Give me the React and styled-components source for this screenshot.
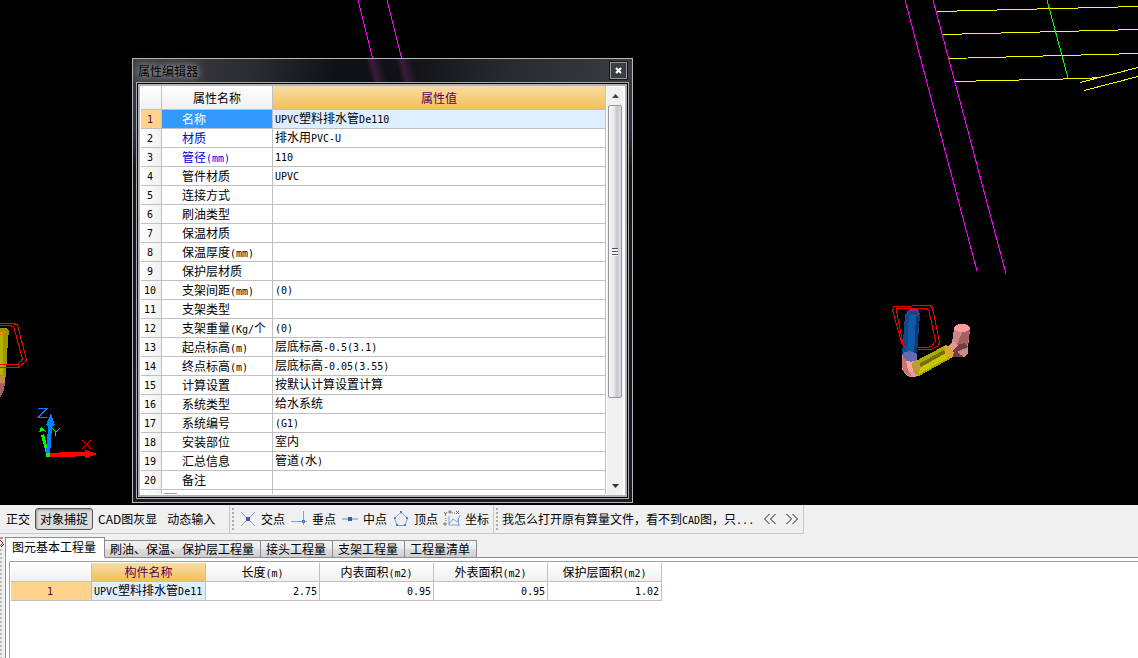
import { useState } from "react";
import styled, { createGlobalStyle } from "styled-components";

const properties = [
    { name: "名称", value: "UPVC塑料排水管De110", selected: true },
    { name: "材质", value: "排水用PVC-U", key: true },
    { name: "管径(mm)", value: "110", key: true },
    { name: "管件材质", value: "UPVC" },
    { name: "连接方式", value: "" },
    { name: "刷油类型", value: "" },
    { name: "保温材质", value: "" },
    { name: "保温厚度(mm)", value: "" },
    { name: "保护层材质", value: "" },
    { name: "支架间距(mm)", value: "(0)" },
    { name: "支架类型", value: "" },
    { name: "支架重量(Kg/个", value: "(0)" },
    { name: "起点标高(m)", value: "层底标高-0.5(3.1)" },
    { name: "终点标高(m)", value: "层底标高-0.05(3.55)" },
    { name: "计算设置", value: "按默认计算设置计算" },
    { name: "系统类型", value: "给水系统" },
    { name: "系统编号", value: "(G1)" },
    { name: "安装部位", value: "室内" },
    { name: "汇总信息", value: "管道(水)" },
    { name: "备注", value: "" },
];

const tabs = ["图元基本工程量", "刷油、保温、保护层工程量", "接头工程量", "支架工程量", "工程量清单"];
const columns = ["长度(m)", "内表面积(m2)", "外表面积(m2)", "保护层面积(m2)"];
const quantities = ["2.75", "0.95", "0.95", "1.02"];

// latin runs are set in a half-width mono face so they line up with the CJK glyphs
function Mixed({ children }) {
    return children.split(/([\x20-\x7e]+)/).map((part, i) =>
        i % 2 ? <Half key={i}>{part}</Half> : part
    );
}

function Scene() {
    return (
        <Canvas aria-hidden="true">
            <g shapeRendering="crispEdges" fill="none" strokeWidth="1">
                <path stroke="#f0f" d="M358 0L373 60M387 0L402 60M905 0L977 271M933 0L1006 274" />
                <path stroke="#ff0" d="M937 11.5L1138 6.5M943 34.5L1138 29.5M949 58.5L1138 53.5M955 81.5L1085 78.5L1100 77.5M1080 82.5L1138 67.5M1084 90.5L1138 76.5" />
                <path stroke="#0f0" d="M1047 0L1068 78" />
            </g>
            <g shapeRendering="crispEdges">
                <path fill="#9c9900" d="M0 328H6L9 331L8 340L6 372L5 382H0Z" />
                <path fill="#b7b300" d="M0 332H3V375H0Z" />
                <path fill="#c68a4a" d="M0 376H5V384H0Z" />
                <path fill="#a85f62" d="M0 383H5L4 390L1 396L0 397Z" />
                <path fill="none" stroke="#ff6a00" d="M0 329H4L6 332L4 334H0" />
                <path fill="none" stroke="red" d="M0 323.5H13L17.500 325L26.500 360L24 363L18 367.500H0M0 325.500H11L14 328L22.500 359L18 364.500H0" />
            </g>
            <g shapeRendering="crispEdges">
                <path fill="#0f0" d="M41 435L44 434L47 446V456L45 450Z M39 432L41 427L46 432L43 431Z" />
                <path fill="#0080ff" d="M46 425L51 413L55 425L52 427L50 455H46L48 427Z" />
                <path fill="red" d="M49 453L68 452H85V450L97 454L85 458V456L67 457H49Z" />
                <path fill="#0f0" d="M46 453H50V457H46Z" />
                <path fill="none" stroke="#0080ff" d="M38 408.500H47L38 417.500H47" />
                <path fill="none" stroke="#0f0" d="M52.500 428.500L56 432L60 428M55.500 431V436" />
                <path fill="none" stroke="red" d="M82 440L91 449M91 440L82 449" />
            </g>
            <g shapeRendering="crispEdges">
                <path fill="#ee9494" d="M902 355Q909 351 917 355L917 370L919 375Q913 379 908 376Q900 370 902 362Z" />
                <path fill="#c77474" d="M902 358L908 358L908 370L912 377Q900 373 902 358Z" />
                <path fill="#ffa2a2" d="M906 360L912 360L913 373L908 370Z" />
                <path fill="#cc8888" d="M954 329H970L968 348L968 353L965 357L957 357L952 350L950 358L944 355L951 349Z" />
                <path fill="#a85f60" d="M963 330L970 329L968 344L955 349Z" />
                <path fill="#743f40" d="M949 356L954 346L965 343L968 347L957 352L964 357H955Z" />
                <path fill="#e69899" d="M948 346L954 341L958 346L949 354Z" />
                <ellipse cx="962" cy="328" rx="8" ry="4" fill="#ff9b9d" />
                <path fill="#aba900" d="M912 363L946 345L949 347L953 357L919 376L913 372Z" />
                <path fill="#737000" d="M915 366L944 350L946 353L917 369Z" />
                <path fill="#c9c800" d="M916 370L948 352L951 356L919 374Z" />
                <path fill="#b99a3c" d="M912 363L918 361L921 367L919 373L913 371Z" />
                <path fill="#dba931" d="M944 346L950 346L954 353L952 358L946 357Z" />
                <path fill="#1159a8" d="M905 314L911 309H918L920 314L917 355Q909 360 902 355Z" />
                <path fill="#0d488d" d="M905 314L909 312L907 357L902 355Z" />
                <path fill="#0b3c79" d="M916 314L920 314L917 355L914 357Z" />
                <path fill="#626cae" d="M903 353Q911 349 917 354L917 360Q909 364 903 358Z" />
                <ellipse cx="913" cy="313" rx="6" ry="3" fill="#144689" stroke="#793584" />
                <path fill="none" stroke="red" d="M906 347.500L902 344L892.500 310L894 306.500L930 305.500L932.500 308L939.500 342L938 346L931 349.500H918M903 344L896.500 311L897 308.500H926L929 311L935.500 341L932 346L928 347.500H918" />
            </g>
        </Canvas>
    );
}

function PropertyDialog() {
    return (
        <Dialog role="dialog" aria-label="属性编辑器">
            <TitleBar>
                <Title>属性编辑器</Title>
                <CloseButton aria-label="关闭">
                    <svg width="7" height="7" viewBox="0 0 7 7"><path d="M1 1L6 6M6 1L1 6" stroke="#fff" strokeWidth="2" /></svg>
                </CloseButton>
            </TitleBar>
            <Frame>
                <PropertyTable>
                    <colgroup>
                        <col width="21" />
                        <col width="111" />
                        <col />
                    </colgroup>
                    <thead>
                        <tr>
                            <HeadCell aria-label="序号" />
                            <HeadCell>属性名称</HeadCell>
                            <HeadCell $active>属性值</HeadCell>
                        </tr>
                    </thead>
                    <tbody>
                        {properties.map((p, index) => (
                            <tr key={p.name}>
                                <NumberCell $active={p.selected}><Mixed>{String(index + 1)}</Mixed></NumberCell>
                                <NameCell $active={p.selected} $key={p.key}><Mixed>{p.name}</Mixed></NameCell>
                                <ValueCell $active={p.selected}><Mixed>{p.value}</Mixed></ValueCell>
                            </tr>
                        ))}
                        <tr>
                            <NumberCell />
                            <NameCell><Expander /></NameCell>
                            <ValueCell />
                        </tr>
                    </tbody>
                </PropertyTable>
                <ScrollBar>
                    <ScrollButton aria-label="向上滚动">
                        <svg width="7" height="4"><path d="M0 4L3.500 0L7 4Z" fill="#444" /></svg>
                    </ScrollButton>
                    <Thumb><Grip /></Thumb>
                    <Track />
                    <ScrollButton aria-label="向下滚动">
                        <svg width="7" height="4"><path d="M0 0H7L3.500 4Z" fill="#333" /></svg>
                    </ScrollButton>
                </ScrollBar>
            </Frame>
        </Dialog>
    );
}

function SnapIcon({ type }) {
    return (
        <svg width="18" height="18" viewBox="0 0 18 18" fill="none" stroke="#78a6dc" strokeWidth="1">
            {type === "cross" && <><path d="M2 2L16 16M16 2L2 16" /><path d="M7 7H11V11H7Z" fill="#3c5dab" stroke="none" /></>}
            {type === "foot" && <><path d="M1 11.500H17M13.500 1V15" /><path d="M12 10H15V13H12Z" fill="#4e7dc6" stroke="none" /></>}
            {type === "middle" && <><path d="M1 9H17" strokeWidth="2" stroke="#a3c4ea" /><path d="M7 7H11V11H7Z" fill="#3c5dab" stroke="none" /></>}
            {type === "vertex" && <><path d="M9 2.500L15.500 8L13 15.500H5L2.500 8Z" /><path d="M8 1h2v2H8zM2 7h2v2H2zM14 7h2v2h-2zM4 14h2v2H4zM12 14h2v2h-2z" fill="#4e7dc6" stroke="none" /></>}
            {type === "coord" && <><path d="M6 6V15H17M6 14L10 9L14 12L17 5M15.500 8V16" /><path d="M1 2L2.500 4L4 2M2.500 4V6M6 1h2v2H6zM1 13h2v2H1zM13 1L16 4M16 1L13 4M3 8v1M3 10v1M9 3h1M11 3h1" stroke="#777" /></>}
        </svg>
    );
}

export default function App() {
    const [active, setActive] = useState(0);

    return (
        <Page>
            <GlobalStyle />
            <Viewport>
                <Scene />
                <PropertyDialog />
            </Viewport>
            <ToolArea>
                <ToolBar $wide>
                    <ToolButton>正交</ToolButton>
                    <ToolButton $pressed aria-pressed="true">对象捕捉</ToolButton>
                    <ToolButton>CAD图灰显</ToolButton>
                    <ToolButton>动态输入</ToolButton>
                </ToolBar>
                <ToolBar>
                    <Handle />
                    <SnapButton><SnapIcon type="cross" />交点</SnapButton>
                    <SnapButton><SnapIcon type="foot" />垂点</SnapButton>
                    <SnapButton><SnapIcon type="middle" />中点</SnapButton>
                    <SnapButton><SnapIcon type="vertex" />顶点</SnapButton>
                    <SnapButton><SnapIcon type="coord" />坐标</SnapButton>
                </ToolBar>
                <ToolBar $tight>
                    <Handle />
                    <HelpLink href="#help"><Mixed>我怎么打开原有算量文件，看不到CAD图，只...</Mixed></HelpLink>
                    <ArrowButton aria-label="上一条">
                        <svg width="12" height="10"><path d="M5.500 0L0.500 5L5.500 10M11.500 0L6.500 5L11.500 10" /></svg>
                    </ArrowButton>
                    <ArrowButton aria-label="下一条">
                        <svg width="12" height="10"><path d="M0.500 0L5.500 5L0.500 10M6.500 0L11.500 5L6.500 10" /></svg>
                    </ArrowButton>
                </ToolBar>
            </ToolArea>
            <Dock>
                <DockHandle>
                    <svg width="4" height="12"><path d="M0 1H3M0 3L3 6L0 9" stroke="#a33" fill="none" /><path d="M1 10L4 7" stroke="#333" /></svg>
                    <Dots />
                </DockHandle>
                <Panel>
                    <TabList role="tablist">
                        {tabs.map((tab, index) => (
                            <Tab
                                key={tab}
                                role="tab"
                                aria-selected={active === index}
                                $active={active === index}
                                onClick={() => setActive(index)}
                            >
                                {tab}
                            </Tab>
                        ))}
                    </TabList>
                    <Sheet>
                        <SheetBox>
                            <QuantityTable>
                                <colgroup>
                                    <col width="81" />
                                    <col span="5" width="114" />
                                </colgroup>
                                <thead>
                                    <tr>
                                        <HeadCell $small aria-label="序号" />
                                        <HeadCell $small $active>构件名称</HeadCell>
                                        {columns.map((c) => (
                                            <HeadCell $small key={c}><Mixed>{c}</Mixed></HeadCell>
                                        ))}
                                    </tr>
                                </thead>
                                <tbody>
                                    <tr>
                                        <NumberCell $active><Mixed>1</Mixed></NumberCell>
                                        <ValueCell $active><Mixed>UPVC塑料排水管De11</Mixed></ValueCell>
                                        {quantities.map((q, index) => (
                                            <ValueCell $right key={index}><Mixed>{q}</Mixed></ValueCell>
                                        ))}
                                    </tr>
                                </tbody>
                            </QuantityTable>
                        </SheetBox>
                    </Sheet>
                </Panel>
            </Dock>
        </Page>
    );
}

const GlobalStyle = createGlobalStyle`
    * {
        box-sizing: border-box;
    }
    body {
        margin: 0;
        background: #f0f0f0;
        color: #000;
        font-family: "Noto Sans CJK SC", sans-serif;
        font-size: 12px;
        line-height: 18px;
    }
    button {
        font: inherit;
        color: inherit;
        padding: 0;
        border: 0;
        background: none;
        white-space: nowrap;
    }
    svg {
        display: block;
        flex: none;
    }
`;

const Half = styled.span`
    font-family: "DejaVu Sans Mono", monospace;
    font-size: 10px;
    line-height: 1;
`;

const Page = styled.div`
    display: flex;
    flex-direction: column;
    min-height: 100vh;
    overflow: hidden;
`;

const Viewport = styled.main`
    position: relative;
    height: 505px;
    background: #000;
`;

const Canvas = styled.svg`
    width: 100%;
    height: 100%;
`;

const Dialog = styled.section`
    position: absolute;
    left: 132px;
    top: 58px;
    width: 501px;
    height: 445px;
    display: flex;
    flex-direction: column;
    padding: 0 3px 3px;
    border: 1px solid #b4b8bb;
    background: linear-gradient(#3a3b3f, #30323a 70px, #15161a 110px, #1b1c24);
`;

const TitleBar = styled.header`
    display: flex;
    justify-content: space-between;
    align-items: center;
    height: 23px;
    margin: 0 -3px;
    padding: 0 5px;
    background:
        linear-gradient(75deg, transparent 230px, #3a1b3c 236px, transparent 246px, transparent 259px, #3a1b3c 265px, transparent 275px),
        linear-gradient(100deg, #3f4043, #2b2c2f 120px, #111216 200px, #111216 270px, #292a2d 370px, #3b3c40);
`;

const Title = styled.h1`
    margin: 0;
    font-size: 12px;
    font-weight: 400;
    color: #000;
    text-shadow: 0 0 4px #94979a, 0 0 8px #94979a, 0 0 12px #85888b;
`;

const CloseButton = styled.button`
    display: flex;
    align-items: center;
    justify-content: center;
    width: 17px;
    height: 17px;
    border: 1px solid #95979a;
    background: #3b3d41;
    box-shadow: 0 0 0 1px #17181a;
`;

const Frame = styled.div`
    display: flex;
    flex: 1;
    min-height: 0;
    overflow: hidden;
    padding: 3px;
    border: 1px solid #a9abad;
    background: #fff;
    box-shadow: inset 0 0 0 1px #000, inset 0 0 0 3px #b2b0b4;
`;

const PropertyTable = styled.table`
    flex: 1;
    align-self: flex-start;
    height: 100%;
    display: table;
    table-layout: fixed;
    border-spacing: 0;
    margin-left: 1px;
    clip-path: inset(0 0 calc(100% - 408px) 0);
`;

const QuantityTable = styled.table`
    width: 651px;
    table-layout: fixed;
    border-spacing: 0;
`;

const HeadCell = styled.th`
    height: ${({ $small }) => ($small ? "19px" : "24px")};
    padding: 0;
    font-weight: 400;
    color: ${({ $active }) => ($active ? "#5a005a" : "#000")};
    background: ${({ $active }) => ($active ? "linear-gradient(#f9dca2, #f1c05e)" : "linear-gradient(#fff, #f0f0f0)")};
    border-right: 1px solid #c0c0c0;
    border-bottom: 1px solid #c0c0c0;
`;

const Cell = styled.td`
    height: 19px;
    padding: 0 2px 2px;
    line-height: 16px;
    overflow: hidden;
    white-space: nowrap;
    border-right: 1px solid #c0c0c0;
    border-bottom: 1px solid #c0c0c0;
`;

const NumberCell = styled(Cell)`
    text-align: center;
    padding: 0 2px 2px 0;
    color: ${({ $active }) => ($active ? "#5a005a" : "#000")};
    background: ${({ $active }) => ($active ? "#ffd38c" : "linear-gradient(90deg, #fff, #f0f0f0)")};
`;

const NameCell = styled(Cell)`
    padding: 0 0 0 20px;
    line-height: 18px;
    color: ${({ $active, $key }) => ($active ? "#fff" : $key ? "#0000e0" : "#000")};
    background: ${({ $active }) => ($active ? "#3399ff" : "#fff")};
`;

const ValueCell = styled(Cell)`
    text-align: ${({ $right }) => ($right ? "right" : "left")};
    background: ${({ $active }) => ($active ? "#deeeff" : "#fff")};
`;

const Expander = styled.div`
    width: 13px;
    height: 13px;
    margin-left: -18px;
    border: 1px solid #a0a0a0;
    background: #f0f0f0;
`;

const ScrollBar = styled.div`
    display: flex;
    flex-direction: column;
    width: 16px;
    margin: 1px 2px 0 1px;
    background: #f0f0f0;
`;

const ScrollButton = styled.button`
    display: flex;
    align-items: center;
    justify-content: center;
    height: 18px;
    flex: none;
`;

const Thumb = styled.div`
    display: flex;
    align-items: center;
    justify-content: center;
    height: 293px;
    flex: none;
    margin: 0 1px;
    border: 1px solid #979797;
    border-radius: 2px;
    background: linear-gradient(90deg, #f7f7f7, #e6e6e8 45%, #c9cad0 60%, #d8d9dd);
`;

const Grip = styled.div`
    width: 6px;
    height: 8px;
    background: repeating-linear-gradient(#555 0 1px, #f5f5f5 1px 3px);
`;

const Track = styled.div`
    flex: 1;
`;

const ToolArea = styled.div`
    display: flex;
    height: 29px;
`;

const ToolBar = styled.div`
    display: flex;
    align-items: center;
    min-width: ${({ $wide }) => ($wide ? "230px" : "0")};
    padding-left: 1px;
    padding-right: ${({ $tight }) => ($tight ? "0" : "4px")};
    border-right: 1px solid #c8c8c8;
    border-bottom: 1px solid #c8c8c8;
    & + & {
        padding-left: 2px;
    }
`;

const ToolButton = styled.button`
    height: 22px;
    padding: 0 4px;
    border: 1px solid ${({ $pressed }) => ($pressed ? "#555" : "transparent")};
    border-radius: 3px;
    background: ${({ $pressed }) => ($pressed ? "#dcdcdc" : "none")};
    box-shadow: ${({ $pressed }) => ($pressed ? "inset 1px 1px 2px #999" : "none")};
`;

const SnapButton = styled.button`
    display: flex;
    align-items: center;
    gap: 4px;
    width: 51px;
    padding-left: 5px;
`;

const Handle = styled.span`
    width: 2px;
    height: 22px;
    background: repeating-linear-gradient(#aaa 0 2px, transparent 2px 4px);
`;

const HelpLink = styled.a`
    margin: 0 5px 0 4px;
    color: #000;
    text-decoration: none;
    white-space: nowrap;
`;

const ArrowButton = styled.button`
    width: 22px;
    svg {
        margin: 0 auto;
        fill: none;
        stroke: #222;
    }
`;

const Dock = styled.div`
    display: flex;
    flex: 1;
    padding-top: 3px;
`;

const DockHandle = styled.div`
    width: 5px;
    display: flex;
    flex-direction: column;
`;

const Dots = styled.div`
    flex: 1;
    width: 2px;
    background: repeating-linear-gradient(#bbb 0 2px, transparent 2px 4px);
`;

const Panel = styled.div`
    flex: 1;
    display: flex;
    flex-direction: column;
    min-width: 0;
`;

const TabList = styled.div`
    display: flex;
    align-items: flex-end;
    height: 21px;
    box-shadow: inset 0 -1px #898c95;
`;

const Tab = styled.button`
    height: ${({ $active }) => ($active ? "21px" : "18px")};
    padding: ${({ $active }) => ($active ? "0 8px 1px 6px" : "0 6px 0 5px")};
    border: 1px solid #898c95;
    border-bottom-color: ${({ $active }) => ($active ? "#fff" : "#898c95")};
    background: ${({ $active }) => ($active ? "#fff" : "linear-gradient(#f2f2f2, #ebebeb 50%, #dddddd 50%, #cfcfcf)")};
    line-height: 16px;
    & + & {
        border-left-width: 0;
    }
`;

const Sheet = styled.div`
    flex: 1;
    display: flex;
    padding: 3px 0 0 3px;
    border-left: 1px solid #898c95;
    background: #fff;
`;

const SheetBox = styled.div`
    flex: 1;
    padding: 1px 0 0 1px;
    border-top: 1px solid #a0a0a4;
    border-left: 1px solid #a0a0a4;
`;
